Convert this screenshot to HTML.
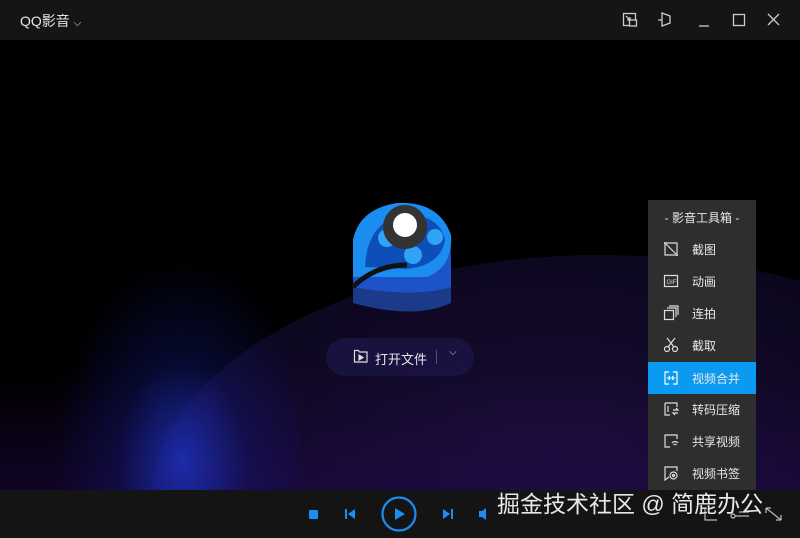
<!DOCTYPE html>
<html><head><meta charset="utf-8"><style>
*{margin:0;padding:0;box-sizing:border-box}
html,body{width:800px;height:538px;overflow:hidden}
body{background:#000;font-family:"Liberation Sans","Noto Sans CJK SC",sans-serif;color:#ddd;position:relative}
#top{position:absolute;left:0;top:0;width:800px;height:40px;background:#151515}
#top .t{position:absolute;left:20px;top:11px;font-size:14px;color:#e6e6e6}
#vid{position:absolute;left:0;top:40px;width:800px;height:450px;overflow:hidden;background:#000}
#bar{position:absolute;left:0;top:490px;width:800px;height:48px;background:#141414}
#menu{position:absolute;left:648px;top:200px;width:108px;height:294px;background:#2e2e2e}
.it{position:absolute;left:0;width:108px;height:32px;font-size:12px;color:#e8e8e8}
.it span{position:absolute;left:44px;top:8px}
.it svg{position:absolute;left:15px;top:8px}
.hl{background:#0a9af2}
.wm{position:absolute;left:497px;top:489px;font-size:23px;line-height:30px;color:#e8e8e8;white-space:nowrap}
</style></head><body>
<div id="top"><div class="t">QQ影音 <span style="font-size:10px">⌵</span></div>
<svg style="position:absolute;left:620px;top:10px" width="170" height="20" fill="none" stroke="#ccc" stroke-width="1.3">
<rect x="3.5" y="3.5" width="12" height="12"/><rect x="9.5" y="10" width="7" height="6" fill="#151515"/><path d="M6 6l4 4M10 7v3H7"/>
<path d="M42 3l8 3v7l-8 3zM38 10h4"/>
<path d="M79 16h10"/>
<rect x="113.5" y="4.5" width="11" height="11"/>
<path d="M148 4l11 11M159 4l-11 11"/>
</svg></div>
<div id="vid">
<div style="position:absolute;left:150px;top:215px;width:900px;height:500px;border-radius:50%;background:radial-gradient(ellipse at 45% 40%,rgba(28,14,58,.9),rgba(16,8,38,.8) 50%,rgba(8,4,22,.6) 80%)"></div>
<div style="position:absolute;left:0;top:330px;width:800px;height:120px;background:linear-gradient(to bottom,rgba(30,10,60,0),rgba(40,10,90,.4))"></div>
<div style="position:absolute;left:40px;top:150px;width:260px;height:340px;background:radial-gradient(ellipse 50% 60% at 55% 80%,rgba(30,55,210,.75),rgba(20,25,130,.35) 50%,rgba(0,0,0,0) 100%)"></div>
<svg style="position:absolute;left:345px;top:155px" width="110" height="120">
<path d="M8 55 Q10 20 45 15 Q85 10 106 40 L106 108 Q70 125 8 108Z" fill="#1b3a8a"/>
<path d="M8 75 Q10 40 45 35 Q85 30 106 60 L106 92 Q70 103 8 92Z" fill="#1d53c8"/>
<path d="M8 82 L8 45 Q14 14 52 8 Q94 6 106 40 Q108 72 82 82Z" fill="#1b8cf0"/>
<path d="M20 72 Q22 28 57 20 Q94 18 100 45 Q96 70 62 74Z" fill="#0d4fb8"/>
<circle cx="42" cy="43" r="9" fill="#31a3f5"/><circle cx="68" cy="60" r="9" fill="#31a3f5"/><circle cx="90" cy="42" r="8" fill="#31a3f5"/>
<path d="M8 92 Q30 70 62 70" stroke="#111" stroke-width="5" fill="none"/>
<circle cx="60" cy="32" r="22" fill="#333"/><circle cx="60" cy="30" r="12" fill="#fff"/>
</svg>
<div style="position:absolute;left:326px;top:298px;width:148px;height:38px;border-radius:19px;background:rgba(30,25,80,.6)"></div>
<svg style="position:absolute;left:353px;top:308px" width="16" height="16" fill="none" stroke="#ddd" stroke-width="1.2"><path d="M1.5 2.5h4l1 1.5h7.5v10h-12.5z"/><path d="M6 7l4 2.5-4 2.5z" fill="#ddd"/></svg>
<div style="position:absolute;left:375px;top:309px;font-size:13px;color:#e6e6e6">打开文件</div>
<div style="position:absolute;left:436px;top:310px;width:1px;height:14px;background:#555"></div>
<div style="position:absolute;left:449px;top:307px;font-size:10px;color:#ccc">⌵</div>
</div>
<div id="menu">
<div style="position:absolute;left:0;top:9px;width:108px;text-align:center;font-size:12px;color:#e8e8e8">- 影音工具箱 -</div>
<div class="it" style="top:33px"><svg width="16" height="16" fill="none" stroke="#ddd" stroke-width="1.2"><path d="M2 1v13h13M1 2h13v13M3 3l10 10"/></svg><span>截图</span></div>
<div class="it" style="top:65px"><svg width="16" height="16" fill="none" stroke="#ddd" stroke-width="1.2"><rect x="1.5" y="2.5" width="13" height="11"/><text x="3.5" y="11" font-size="6" fill="#ddd" stroke="none" font-family="Liberation Sans">GIF</text></svg><span>动画</span></div>
<div class="it" style="top:97px"><svg width="16" height="16" fill="none" stroke="#ddd" stroke-width="1.2"><rect x="1.5" y="5.5" width="9" height="9"/><path d="M4 3h9v9M6 1h9v9"/></svg><span>连拍</span></div>
<div class="it" style="top:129px"><svg width="16" height="16" fill="none" stroke="#ddd" stroke-width="1.2"><circle cx="4" cy="12" r="2.5"/><circle cx="12" cy="12" r="2.5"/><path d="M5 10L12 1M11 10L4 1"/></svg><span>截取</span></div>
<div class="it hl" style="top:162px"><svg width="16" height="16" fill="none" stroke="#fff" stroke-width="1.2"><path d="M6 2H2v12h4M10 2h4v12h-4M4 8h3M9 8h3M6 6l1 2-1 2M10 6l-1 2 1 2"/></svg><span>视频合并</span></div>
<div class="it" style="top:193px"><svg width="16" height="16" fill="none" stroke="#ddd" stroke-width="1.2"><path d="M2 2h12v4M2 2v12h5M5 5v6M10 9h5l-2-2M15 12h-5l2 2"/></svg><span>转码压缩</span></div>
<div class="it" style="top:225px"><svg width="16" height="16" fill="none" stroke="#ddd" stroke-width="1.2"><path d="M14 6V2H2v12h5M9 10a4 4 0 0 1 6 0M10.5 12a2 2 0 0 1 3 0"/></svg><span>共享视频</span></div>
<div class="it" style="top:257px"><svg width="16" height="16" fill="none" stroke="#ddd" stroke-width="1.2"><path d="M14 6V2H2v13l4-3"/><circle cx="10.5" cy="10.5" r="3.5"/><circle cx="10.5" cy="10.5" r="1"/></svg><span>视频书签</span></div>
</div>
<div id="bar">
<svg style="position:absolute;left:300px;top:0" width="200" height="48" fill="#1a8ef0">
<rect x="9" y="20" width="9" height="9" rx="1"/>
<path d="M45 19v10h2V19zM48 24l7-5v10z"/>
<circle cx="99" cy="24" r="16.5" fill="none" stroke="#1a8ef0" stroke-width="2.2"/><path d="M95 18l10 6-10 6z"/>
<path d="M143 19l7 5-7 5zM151 19h2v10h-2z"/>
<path d="M179 21h3l4-3v12l-4-3h-3z"/>
</svg>
<svg style="position:absolute;left:700px;top:12px" width="90" height="24" fill="none" stroke="#bbb" stroke-width="1.2"><path d="M5 6v12h12"/><circle cx="33" cy="14" r="2"/><path d="M35 14h14M39 10h10"/><path d="M66 6h5M66 6v5M81 18h-5M81 18v-5M66 6l15 12"/></svg>
</div>
<div class="wm">掘金技术社区 @ 简鹿办公</div>
</body></html>
